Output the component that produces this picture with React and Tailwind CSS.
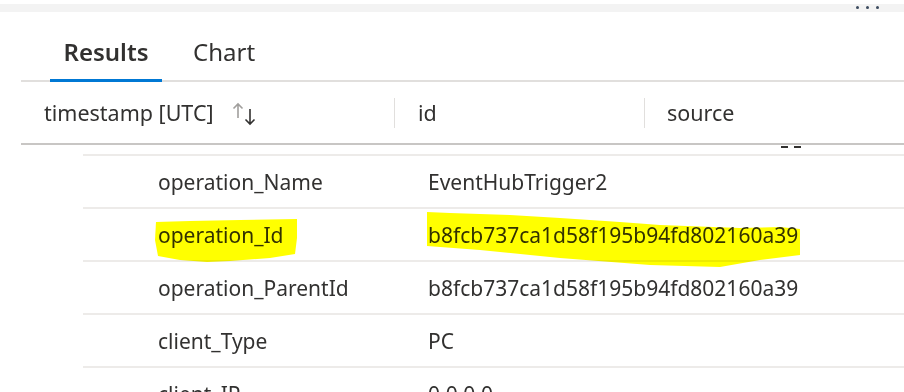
import React from 'react';

const rows = [
    { label: 'operation_Name', value: 'EventHubTrigger2' },
    { label: 'operation_Id', value: 'b8fcb737ca1d58f195b94fd802160a39' },
    { label: 'operation_ParentId', value: 'b8fcb737ca1d58f195b94fd802160a39' },
    { label: 'client_Type', value: 'PC' },
    { label: 'client_IP', value: '0.0.0.0' },
];

const SortIcon = () => (
    <svg width="26" height="24" viewBox="0 0 26 24" className="ml-[18px] mt-[2px]">
        <path d="M6 16V2M1.5 6.5L6 2l4.5 4.5" fill="none" stroke="#a19f9d" strokeWidth="1.6" />
        <path d="M18 7v15M13.5 17.5L18 22l4.5-4.5" fill="none" stroke="#323130" strokeWidth="1.6" />
    </svg>
);

const App = () => {
    return (
        <div
            className="relative w-[904px] h-[392px] overflow-hidden bg-white text-[#323130]"
            style={{ fontFamily: '"Noto Sans", "Open Sans", sans-serif' }}
        >
            {/* top strip */}
            <div className="relative mt-[4px] h-[8px] bg-[#f3f3f3]">
                <div className="absolute left-[856px] top-[2px] flex gap-[7px]">
                    <span className="w-[3px] h-[3px] rounded-full bg-[#3b4a5e]" />
                    <span className="w-[3px] h-[3px] rounded-full bg-[#3b4a5e]" />
                    <span className="w-[3px] h-[3px] rounded-full bg-[#3b4a5e]" />
                </div>
            </div>

            {/* tabs */}
            <div className="ml-[21px] h-[70px] flex items-end border-b-2 border-[#e1dfdd]">
                <div className="ml-[29px] w-[112px] h-full flex flex-col">
                    <div className="flex-1 flex items-center justify-center pt-[12px] text-[24px] leading-none font-semibold">Results</div>
                    <div className="h-[3px] bg-[#0078d4] mb-[-2px]" />
                </div>
                <div className="ml-[31px] h-full flex items-center pt-[11px] text-[24px] leading-none">Chart</div>
            </div>

            {/* header */}
            <div className="ml-[21px] h-[63px] flex items-center border-b-2 border-[#c8c6c4] text-[21.5px] pt-[1px]">
                <div className="w-[373px] pl-[23px] flex items-center">
                    <span>timestamp [UTC]</span>
                    <SortIcon />
                </div>
                <div className="w-px h-[30px] bg-[#e1dfdd]" />
                <div className="w-[249px] pl-[23px]">id</div>
                <div className="w-px h-[30px] bg-[#e1dfdd]" />
                <div className="pl-[22px]">source</div>
            </div>

            {/* clipped descenders from hidden row */}
            <div className="absolute left-[781px] top-[146px] flex gap-[6px]">
                <span className="w-[7px] h-[2px] bg-[#323130]" />
                <span className="w-[7px] h-[2px] bg-[#323130]" />
            </div>

            {/* detail rows */}
            <div className="ml-[83px] mt-[9px] text-[21px]">
                {rows.map((r) => (
                    <div key={r.label} className="h-[53px] border-t-2 border-[#edebe9] flex items-center pt-[2px]">
                        <div className="w-[345px] pl-[75px]">{r.label}</div>
                        <div>{r.value}</div>
                    </div>
                ))}
            </div>

            {/* marker highlights */}
            <svg className="absolute inset-0 pointer-events-none mix-blend-multiply" width="904" height="392">
                <polygon
                    fill="#ffff00"
                    points="156,222 190,221 240,220 297,219 297,238 295,254 270,258 230,261 207,262 180,260 158,256 155,240"
                />
                <polygon
                    fill="#ffff00"
                    points="427,212 450,213 510,215 560,218 620,222 660,225 740,228 780,227 800,229 800,255 760,260 720,267 650,265 560,258 480,250 427,246"
                />
            </svg>
        </div>
    );
};

export default App;
